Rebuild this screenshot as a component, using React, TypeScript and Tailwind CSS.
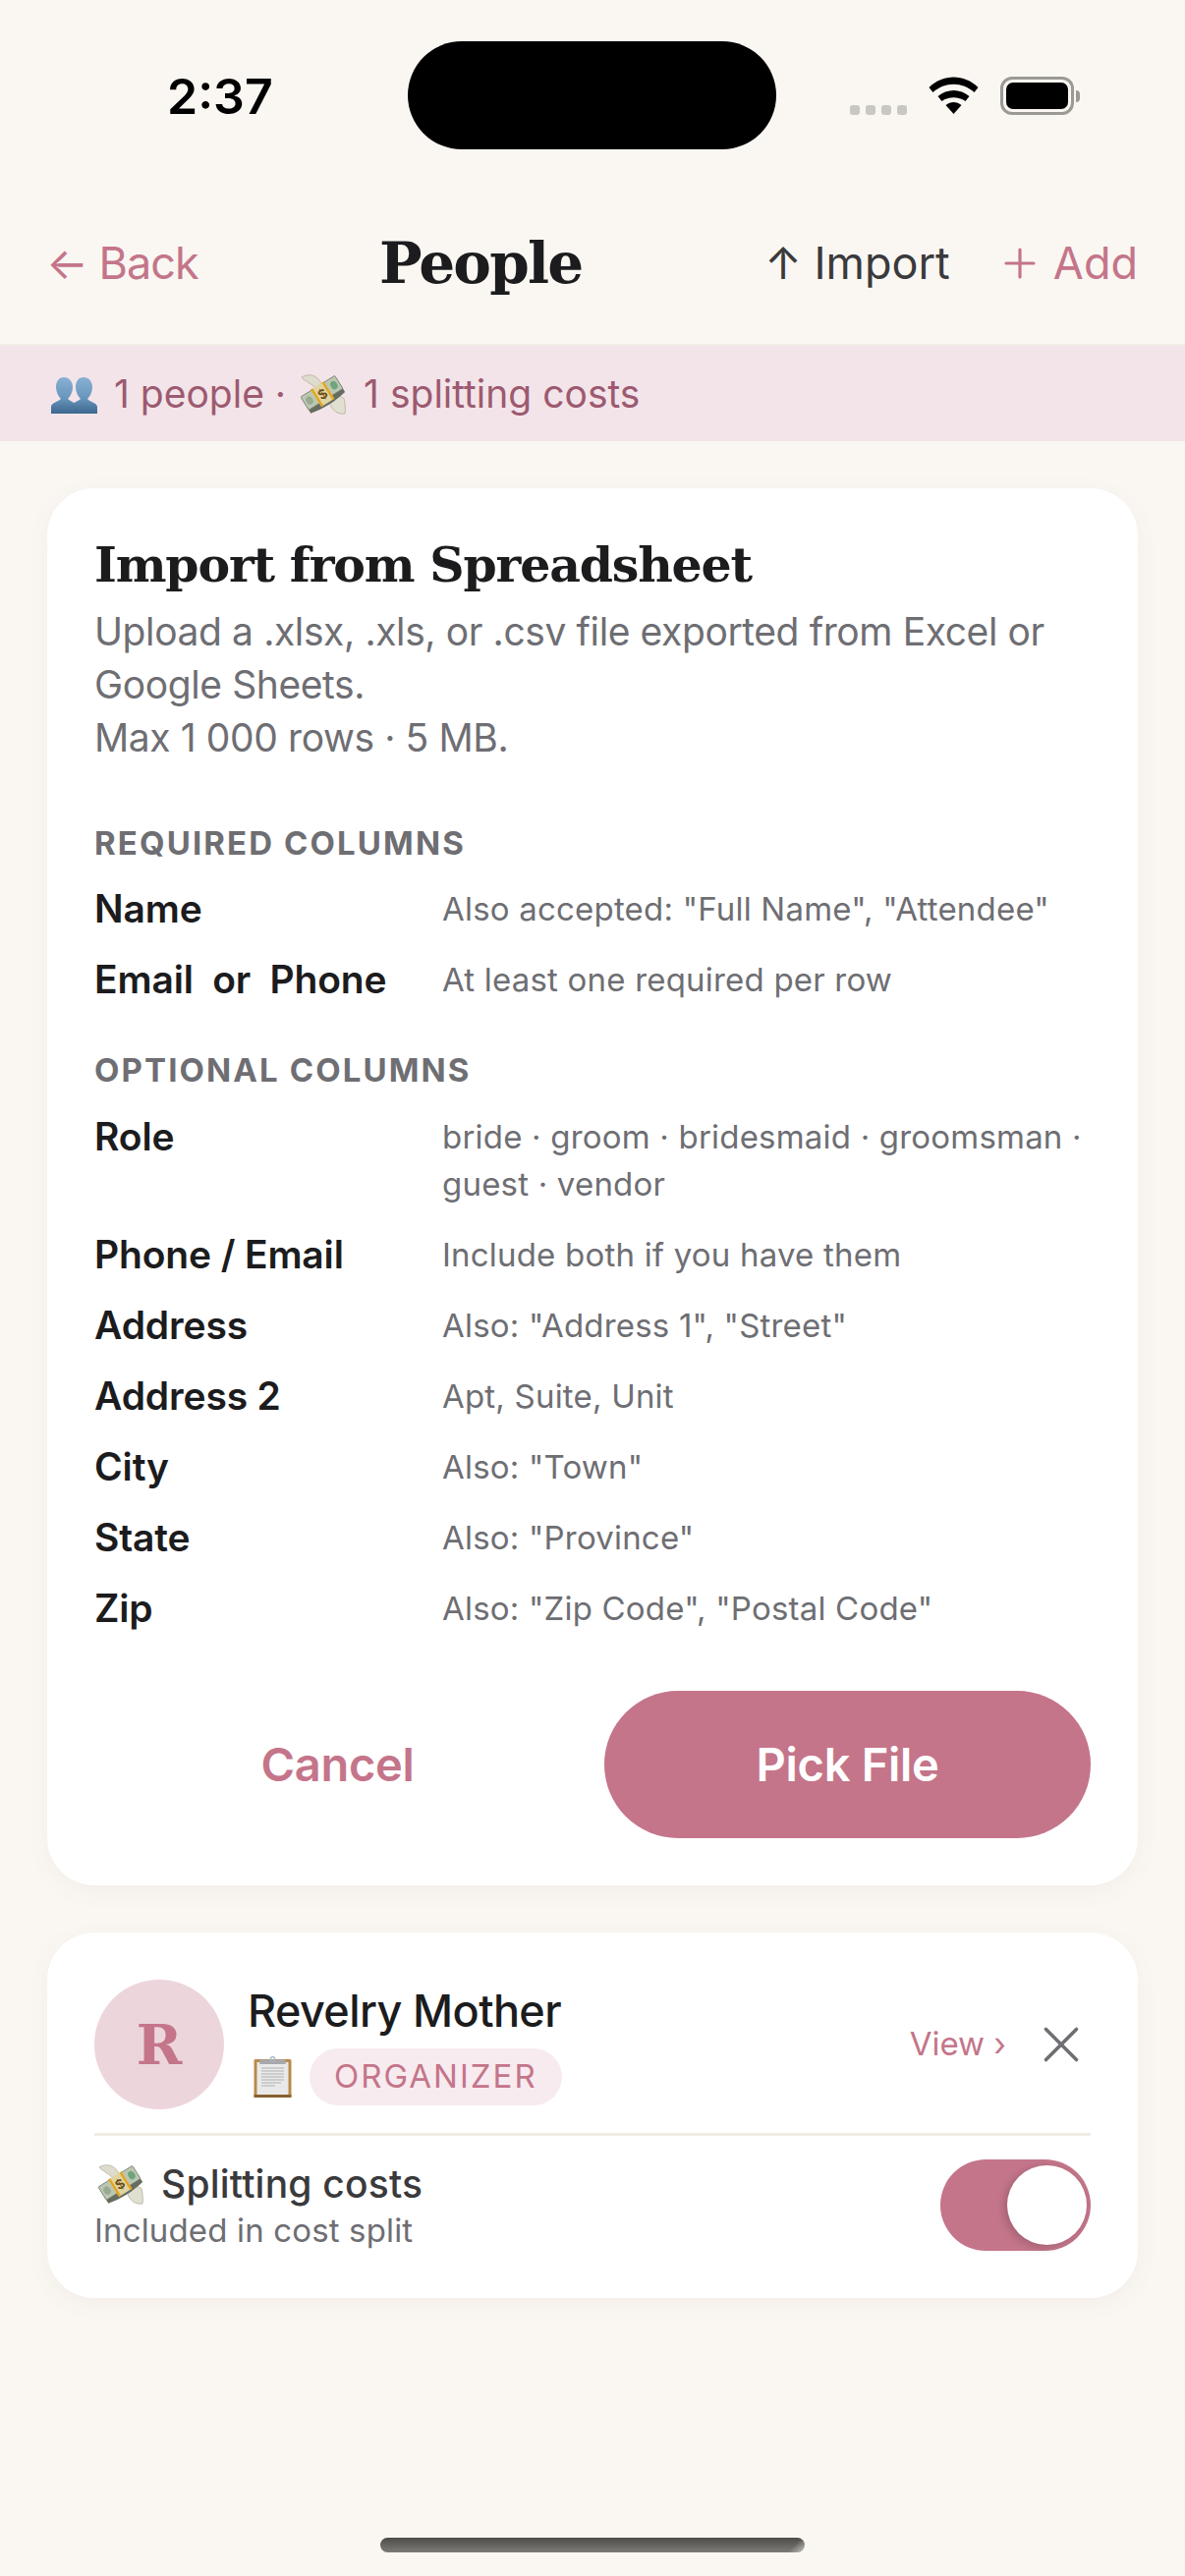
import { Plus, X } from "lucide-react";

const sans = "font-['Inter','Noto_Sans',sans-serif]";
const serif = "font-['DejaVu_Serif','Liberation_Serif',serif]";

interface ColumnRowProps {
  name: string;
  hint: string;
}

const required: ColumnRowProps[] = [
  { name: "Name", hint: 'Also accepted: "Full Name", "Attendee"' },
  { name: "Email  or  Phone", hint: "At least one required per row" },
];

const optional: ColumnRowProps[] = [
  { name: "Role", hint: "bride · groom · bridesmaid · groomsman · guest · vendor" },
  { name: "Phone / Email", hint: "Include both if you have them" },
  { name: "Address", hint: 'Also: "Address 1", "Street"' },
  { name: "Address 2", hint: "Apt, Suite, Unit" },
  { name: "City", hint: 'Also: "Town"' },
  { name: "State", hint: 'Also: "Province"' },
  { name: "Zip", hint: 'Also: "Zip Code", "Postal Code"' },
];

const ColumnRow = ({ name, hint }: ColumnRowProps) => (
  <div className="flex items-start">
    <div className="w-[354px] shrink-0 whitespace-pre text-[39px] leading-[48px] font-semibold tracking-[-0.15px] text-[#1c1c1e]">
      {name}
    </div>
    <div className="text-[33px] leading-[48px] tracking-[0.2px] text-[#6e6e73]">{hint}</div>
  </div>
);

const MoneyWings = ({ className }: { className: string }) => (
  <svg viewBox="0 0 48 44" className={className}>
    {/* top-left wing */}
    <path d="M1 4c5-3 11-3 15 0 3 2 5 5 6 9-1 3-3 4-6 3-3-4-7-5-10-8-2-1-4-2-5-4z" fill="#dddccd" stroke="#a9a896" strokeWidth="0.7" />
    {/* bottom-right wing */}
    <path d="M29 27c3-3 7-4 10-3 2 0 4 1 6 2 1 5 2 11 1 16-6 1-11-2-14-7-1-3-3-5-3-8z" fill="#e0dfd0" stroke="#a9a896" strokeWidth="0.7" />
    <g transform="rotate(-32 23 22)">
      <path d="M2 24h42v8c-14 3-28 3-42 0z" fill="#666d60" />
      <rect x="2" y="12" width="42" height="16" rx="1" fill="#bcc7b2" stroke="#737c6c" strokeWidth="0.8" />
      <ellipse cx="8" cy="20" rx="3.5" ry="4.5" fill="#9aaa92" />
      <ellipse cx="38" cy="20" rx="3.5" ry="4.5" fill="#6fa47d" />
      <rect x="15" y="11" width="16" height="21" fill="#e0d4a2" />
      <rect x="15" y="11" width="2.4" height="21" fill="#e3a51b" />
      <rect x="28.6" y="11" width="2.4" height="21" fill="#e3a51b" />
      <text x="23" y="26.5" textAnchor="middle" fontSize="15" fontWeight="700" fill="#6b4a14" fontFamily="Liberation Sans">
        $
      </text>
    </g>
  </svg>
);

const Busts = ({ className }: { className: string }) => (
  <svg viewBox="0 0 47 38" className={className}>
    <defs>
      <linearGradient id="bustFill" x1="0" y1="0" x2="0" y2="1">
        <stop offset="0" stopColor="#88b0d2" />
        <stop offset="0.55" stopColor="#6a97bf" />
        <stop offset="1" stopColor="#3d6890" />
      </linearGradient>
    </defs>
    <path d="M0 38v-7c0-4 7-5 10-8-3-3-5-8-5-12C5 5 8 1 13 1s9 4 9 10c0 4-2 9-5 12 3 3 9 4 10 8v7z" fill="url(#bustFill)" />
    <path d="M20 38v-7c0-4 7-5 10-8-3-3-5-8-5-12 0-6 3-10 8-10s9 4 9 10c0 4-2 9-5 12 2 3 10 4 10 8v7z" fill="url(#bustFill)" />
    <path d="M27 38c0-3-2-6-6-8" fill="none" stroke="#3d6890" strokeWidth="0.8" opacity="0.6" />
  </svg>
);

const Clipboard = ({ className }: { className: string }) => (
  <svg viewBox="0 0 39 42" className={className}>
    <rect x="0.5" y="3" width="38" height="39" rx="1.5" fill="#b98a4a" />
    <rect x="0.5" y="39" width="38" height="3" fill="#8a6030" />
    <rect x="3.5" y="6" width="32" height="33" fill="#e9e9e9" />
    <path d="M8 12h23M8 15h23M8 18h23M8 21h23M8 24h23M8 27h20M8 30h14" stroke="#c4c4c4" strokeWidth="1.6" />
    <rect x="6" y="3.5" width="27" height="4.5" rx="1.5" fill="#a6a8ad" />
    <circle cx="19.5" cy="2.8" r="2.2" fill="none" stroke="#a9b4c4" strokeWidth="1.3" />
  </svg>
);

const StatusBar = () => (
  <div className="flex h-[210px] items-start">
    <div className="w-[415px] pt-[68px] pl-[170px] text-[50px] leading-[60px] font-semibold text-black">2:37</div>
    <div className="mt-[42px] h-[110px] w-[375px] rounded-[55px] bg-black" />
    <div className="flex h-[117px] items-start pt-[78px] pl-[75px]">
      <div className="flex gap-[6px] self-end">
        <span className="h-[10px] w-[10px] rounded-[3px] bg-[#c9c7c2]" />
        <span className="h-[10px] w-[10px] rounded-[3px] bg-[#c9c7c2]" />
        <span className="h-[10px] w-[10px] rounded-[3px] bg-[#c9c7c2]" />
        <span className="h-[10px] w-[10px] rounded-[3px] bg-[#c9c7c2]" />
      </div>
      <svg viewBox="0 0 50 38" className="ml-[22px] h-[38px] w-[51px]">
        <path d="M0 11C14-3 36-3 50 11l-4 5C34 5 16 5 4 16z" />
        <path d="M9 20c9-8 23-8 32 0l-4 5c-7-5-17-5-24 0z" />
        <path d="M17 29c5-4 11-4 16 0l-8 9z" />
      </svg>
      <div className="ml-[22px] flex items-center">
        <div className="h-[39px] w-[75px] rounded-[12px] border-[3px] border-[#9b9993] p-[3px]">
          <div className="h-full w-full rounded-[7px] bg-black" />
        </div>
        <div className="ml-[2px] h-[12px] w-[4px] rounded-r-full bg-[#9b9993]" />
      </div>
    </div>
  </div>
);

const App = () => {
  return (
    <div className={`${sans} flex min-h-[2622px] flex-col bg-[#faf7f2]`}>
      <StatusBar />

      <header className="flex h-[142px] items-center border-b-[2px] border-[#f1ece5] pb-[24px] pl-[47px] pr-[48px]">
        <div className="w-[339px] text-[45px] tracking-[-1px] text-[#c4758a]">← Back</div>
        <h1 className={`${serif} flex-1 text-[58px] leading-none font-bold tracking-[-1.8px] text-[#1c1c1e]`}>People</h1>
        <div className="text-[45px] text-[#3a3a3c]">↑ Import</div>
        <div className="ml-[47px] flex items-center text-[45px] text-[#c4758a]">
          <Plus className="h-[48px] w-[48px]" strokeWidth={1.6} />
          <span className="ml-[10px]">Add</span>
        </div>
      </header>

      <div className="flex h-[97px] items-center bg-[#f3e4e9] pt-[2px] pl-[52px] text-[39px] text-[#9c5a70]">
        <Busts className="h-[38px] w-[47px]" />
        <span className="ml-[17px]">1 people ·</span>
        <MoneyWings className="ml-[15px] h-[43px] w-[47px]" />
        <span className="ml-[17px]">1 splitting costs</span>
      </div>

      <main className="flex flex-col gap-[48px] px-[48px] pt-[48px]">
        <section className="rounded-[48px] bg-white p-[48px] shadow-[0_6px_24px_rgba(90,60,40,0.05)]">
          <h2 className={`${serif} text-[49px] leading-[60px] font-bold tracking-[-1.2px] text-[#1c1c1e]`}>Import from Spreadsheet</h2>
          <p className="mt-[11px] text-[39px] leading-[54px] tracking-[-0.4px] text-[#6e6e73]">
            Upload a .xlsx, .xls, or .csv file exported from Excel or Google Sheets.
            <br />
            Max 1 000 rows · 5 MB.
          </p>

          <div className="mt-[60px] text-[33px] leading-[40px] font-bold tracking-[2.1px] text-[#6e6e73]">REQUIRED COLUMNS</div>
          <div className="mt-[23px] flex flex-col gap-[24px]">
            {required.map((row) => (
              <ColumnRow key={row.name} {...row} />
            ))}
          </div>

          <div className="mt-[48px] text-[33px] leading-[40px] font-bold tracking-[2.1px] text-[#6e6e73]">OPTIONAL COLUMNS</div>
          <div className="mt-[24px] flex flex-col gap-[24px]">
            {optional.map((row) => (
              <ColumnRow key={row.name} {...row} />
            ))}
          </div>

          <div className="mt-[60px] flex items-center">
            <button className="w-[495px] text-center text-[47px] font-semibold tracking-[-0.3px] text-[#c4758a]">Cancel</button>
            <button className="ml-[24px] h-[150px] flex-1 rounded-[75px] bg-[#c4758a] text-[47px] font-semibold tracking-[-0.3px] text-white">
              Pick File
            </button>
          </div>
        </section>

        <section className="rounded-[48px] bg-white px-[48px] pt-[48px] pb-[48px] shadow-[0_6px_24px_rgba(90,60,40,0.05)]">
          <div className="flex items-center border-b-[3px] border-[#f1ece5] pb-[24px]">
            <div className="flex h-[132px] w-[132px] items-center justify-center rounded-full bg-[#edd5dc]">
              <span className={`${serif} text-[56px] font-bold text-[#c4758a]`}>R</span>
            </div>
            <div className="ml-[24px] flex-1">
              <div className="text-[45px] leading-[56px] font-medium tracking-[-0.6px] text-[#1c1c1e]">Revelry Mother</div>
              <div className="mt-[10px] flex items-center">
                <Clipboard className="ml-[6px] h-[42px] w-[39px]" />
                <span className="ml-[18px] flex h-[58px] items-center rounded-full bg-[#f7ebef] px-[25px] text-[33px] tracking-[2px] text-[#c4758a]">
                  ORGANIZER
                </span>
              </div>
            </div>
            <span className="text-[33px] text-[#c4758a]">View ›</span>
            <X className="ml-[25px] -mr-[1px] h-[62px] w-[62px] text-[#6e6e73]" strokeWidth={1.4} />
          </div>

          <div className="flex items-start justify-between pt-[24px]">
            <div>
              <div className="flex items-center text-[39px] leading-[50px] font-medium tracking-[0.2px] text-[#3a3a3c]">
                <MoneyWings className="ml-[3px] h-[43px] w-[49px]" />
                <span className="ml-[16px]">Splitting costs</span>
              </div>
              <div className="mt-[1px] text-[33px] leading-[42px] tracking-[0.15px] text-[#6e6e73]">Included in cost split</div>
            </div>
            <div className="flex h-[93px] w-[153px] items-center justify-end rounded-full bg-[#c4758a] pr-[4px]">
              <div className="h-[81px] w-[81px] rounded-full bg-white shadow-[-3px_2px_8px_rgba(0,0,0,0.18)]" />
            </div>
          </div>
        </section>
      </main>

      <div className="mt-auto mb-[24px] h-[15px] w-[432px] self-center rounded-full bg-[linear-gradient(135deg,transparent_96%,rgba(205,205,200,0.85)),linear-gradient(to_bottom,#4d4c49,#7c7b77)]" />
    </div>
  );
};

export default App;
